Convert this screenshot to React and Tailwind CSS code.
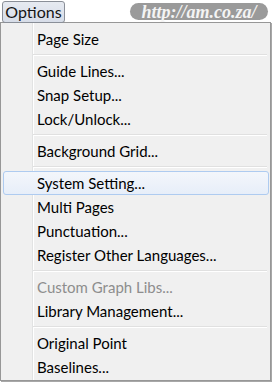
const groups = [
  [{ label: 'Page Size' }],
  [{ label: 'Guide Lines...' }, { label: 'Snap Setup...' }, { label: 'Lock/Unlock...' }],
  [{ label: 'Background Grid...' }],
  [
    { label: 'System Setting...', active: true },
    { label: 'Multi Pages' },
    { label: 'Punctuation...' },
    { label: 'Register Other Languages...' },
  ],
  [{ label: 'Custom Graph Libs...', disabled: true }, { label: 'Library Management...' }],
  [{ label: 'Original Point' }, { label: 'Baselines...' }],
]

function MenuItem({ label, active, disabled }) {
  if (active) {
    return (
      <div className="h-[24px] ml-[2px] mr-[1px] flex items-center pl-[33px] rounded-[3px] border border-[#aecbf0] bg-gradient-to-b from-[#f3f6fb] to-[#e7eef9] text-[#000]">
        {label}
      </div>
    )
  }
  return (
    <div className={`h-[24px] flex items-center pl-[36px] ${disabled ? 'text-[#8d8d8d]' : 'text-[#000]'}`}>
      {label}
    </div>
  )
}

function Separator() {
  return (
    <div className="h-[8px] flex flex-col justify-center ml-[32px] mr-[3px]">
      <div className="h-px bg-[#e0e0e0]" />
      <div className="h-px bg-white" />
    </div>
  )
}

export default function App() {
  return (
    <div className="w-[273px] h-[382px] bg-white font-['Lato',sans-serif] text-[15px] leading-none overflow-hidden">
      <div className="h-[22px] flex items-start">
        <div className="relative z-10 mt-[1px] ml-[2px] h-[22px] w-[63px] flex items-center justify-center rounded-[3px] border border-[#8a8f98] bg-gradient-to-b from-[#e6eaf1] to-[#d7dde8] text-[16px] text-[#141414]">
          Options
        </div>
        <div className="ml-[65px] mt-[3px] h-[17px] w-[138px] rounded-full bg-[#9a9a9a] flex items-center justify-center font-['Liberation_Serif',serif] italic font-bold text-[18px] text-[#f4f4f4]">
          http://am.co.za/
        </div>
      </div>
      <div className="w-[271px] h-[359px] border border-[#979797] shadow-[1px_1px_0_#a8a8a8] pt-[4px] bg-[linear-gradient(to_right,#f0f0f0_31px,#e2e3e3_31px,#e2e3e3_32px,#ffffff_32px,#ffffff_33px,#f0f0f0_33px)]">
        {groups.map((g, i) => (
          <div key={i}>
            {i > 0 && <Separator />}
            {g.map(it => (
              <MenuItem key={it.label} {...it} />
            ))}
          </div>
        ))}
      </div>
    </div>
  )
}
